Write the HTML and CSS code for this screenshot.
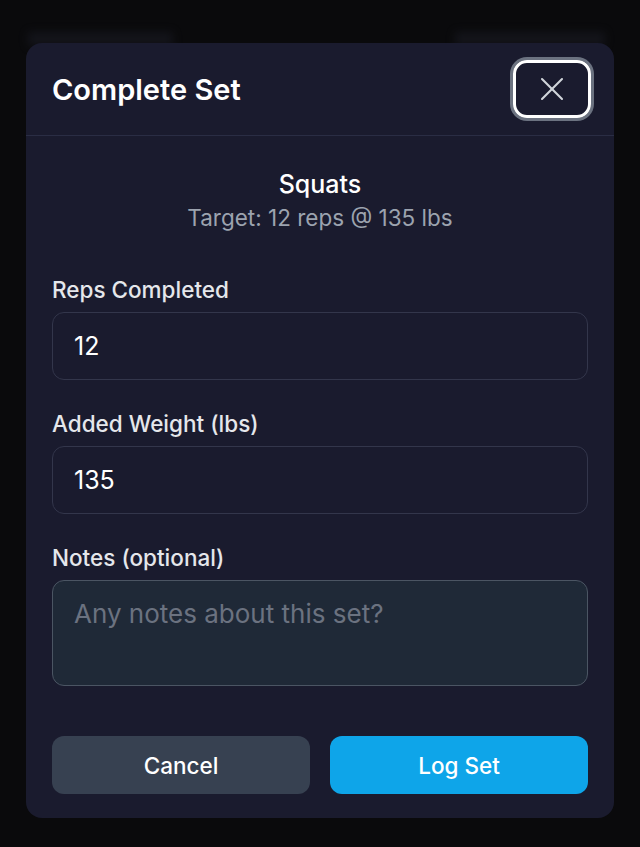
FILE: index.html
```html
<!DOCTYPE html>
<html>
<head>
<meta charset="utf-8">
<link rel="stylesheet" href="styles.css">
</head>
<body>
<div class="backdrop">
  <div class="ghost ghost-left"></div>
  <div class="ghost ghost-right"></div>
</div>
<div class="overlay">
  <div class="modal">
    <div class="header">
      <h2 class="title">Complete Set</h2>
      <button class="close" aria-label="Close">
        <svg width="40" height="40" viewBox="0 0 24 24" fill="none" stroke="#d1d5db" stroke-width="1.25" stroke-linecap="round"><path d="M18 6 6 18"/><path d="m6 6 12 12"/></svg>
      </button>
    </div>
    <div class="body">
      <div class="exercise">
        <div class="ex-name">Squats</div>
        <div class="ex-target">Target: 12 reps @ 135 lbs</div>
      </div>
      <div class="field">
        <label class="label">Reps Completed</label>
        <div class="input">12</div>
      </div>
      <div class="field">
        <label class="label">Added Weight (lbs)</label>
        <div class="input">135</div>
      </div>
      <div class="field field-last">
        <label class="label">Notes (optional)</label>
        <div class="textarea">Any notes about this set?</div>
      </div>
      <div class="actions">
        <button class="btn btn-cancel">Cancel</button>
        <button class="btn btn-primary">Log Set</button>
      </div>
    </div>
  </div>
</div>
</body>
</html>
```
FILE: styles.css
```css
* { box-sizing: border-box; }
html, body { margin: 0; padding: 0; }
body {
  width: 640px;
  height: 847px;
  background: #0a0a0c;
  font-family: Inter, "Noto Sans", sans-serif;
  overflow: hidden;
  position: relative;
}
.backdrop { position: absolute; inset: 0; }
.ghost {
  position: absolute;
  top: 32px;
  height: 14px;
  background: #1a1b24;
  filter: blur(4px);
  opacity: 0.6;
}
.ghost-left { left: 28px; width: 145px; }
.ghost-right { left: 455px; width: 150px; }
.overlay {
  position: relative;
  padding: 43px 26px 0 26px;
}
.modal {
  width: 588px;
  background: #1a1b2e;
  border-radius: 16px;
}
.header {
  display: flex;
  justify-content: space-between;
  align-items: center;
  padding: 17px 23px 17px 26px;
  border-bottom: 1px solid #2a2d44;
}
.title {
  margin: 0;
  font-size: 29px;
  font-weight: 600;
  color: #ffffff;
}
.close {
  width: 78px;
  height: 58px;
  border: 3px solid #ffffff;
  border-radius: 14px;
  background: transparent;
  box-shadow: 0 0 0 3px #6b7280;
  display: flex;
  align-items: center;
  justify-content: center;
  padding: 0;
}
.body {
  padding: 32px 26px 24px 26px;
}
.exercise {
  text-align: center;
  margin-bottom: 38px;
}
.ex-name {
  font-size: 25px;
  font-weight: 500;
  color: #ffffff;
  line-height: 32px;
}
.ex-target {
  font-size: 22.5px;
  color: #9ca3af;
  line-height: 36px;
}
.field { margin-bottom: 28px; }
.field-last { margin-bottom: 0; }
.label {
  display: block;
  font-size: 22.5px;
  font-weight: 500;
  color: #e5e7eb;
  line-height: 32px;
  margin-bottom: 6px;
}
.input {
  height: 68px;
  border: 1px solid #33364b;
  border-radius: 12px;
  background: #1a1b2e;
  color: #ffffff;
  font-size: 25px;
  padding: 0 21px;
  display: flex;
  align-items: center;
}
.textarea {
  height: 106px;
  border: 1px solid #4b5563;
  border-radius: 12px;
  background: #1f2937;
  color: #6b7280;
  font-size: 26px;
  padding: 18px 21px;
  line-height: 30px;
}
.actions {
  display: flex;
  gap: 20px;
  margin-top: 50px;
}
.btn {
  flex: 1;
  height: 58px;
  border: none;
  border-radius: 12px;
  font-family: Inter, "Noto Sans", sans-serif;
  font-size: 22.5px;
  font-weight: 500;
  color: #ffffff;
}
.btn-cancel { background: #374151; }
.btn-primary { background: #0ea5e9; }
```
